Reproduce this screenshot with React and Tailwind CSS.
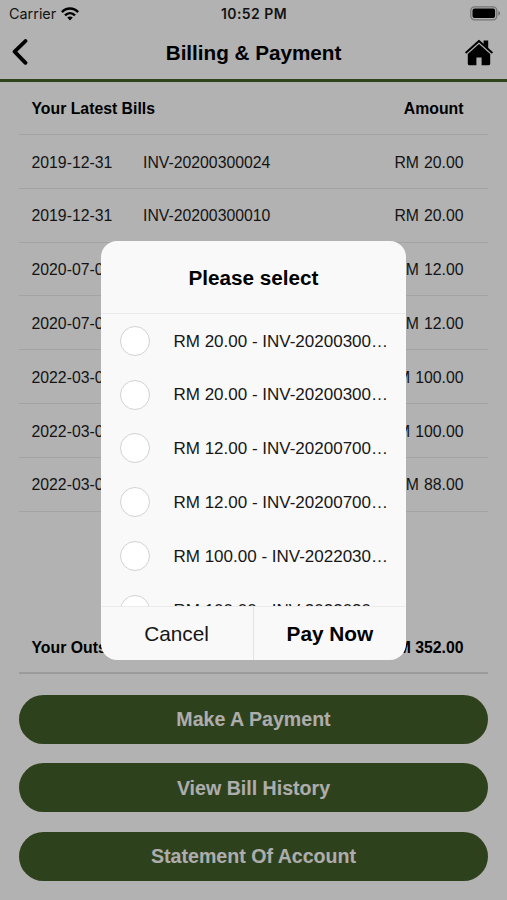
const bills = [
  { date: '2019-12-31', invoice: 'INV-20200300024', amount: 'RM 20.00' },
  { date: '2019-12-31', invoice: 'INV-20200300010', amount: 'RM 20.00' },
  { date: '2020-07-01', invoice: 'INV-20200700012', amount: 'RM 12.00' },
  { date: '2020-07-01', invoice: 'INV-20200700018', amount: 'RM 12.00' },
  { date: '2022-03-01', invoice: 'INV-20220300001', amount: 'RM 100.00' },
  { date: '2022-03-01', invoice: 'INV-20220300002', amount: 'RM 100.00' },
  { date: '2022-03-01', invoice: 'INV-20220300003', amount: 'RM 88.00' },
];

const actions = ['Make A Payment', 'View Bill History', 'Statement Of Account'];

function WifiIcon() {
  return (
    <svg width="18" height="14" viewBox="0 0 18 14" fill="none" stroke="#000" strokeWidth="2.5">
      <path d="M0.9 5.2C5.4 0.4 12.6 0.4 17.1 5.2" />
      <path d="M4 8.4C6.9 5.5 11.1 5.5 14 8.4" />
      <path d="M9 13.4L6.2 10.6C7.8 9.2 10.2 9.2 11.8 10.6Z" fill="#000" stroke="none" />
    </svg>
  );
}

function BatteryIcon() {
  return (
    <svg width="31" height="15" viewBox="0 0 31 15" fill="none">
      <rect x="0.8" y="0.8" width="26" height="13" rx="3.8" stroke="#000" strokeOpacity="0.35" strokeWidth="1.3" />
      <rect x="2.5" y="2.5" width="22.6" height="9.6" rx="2" fill="#000" />
      <path d="M28.3 5C30.6 5.8 30.6 8.8 28.3 9.6Z" fill="#000" fillOpacity="0.4" />
    </svg>
  );
}

function HomeIcon() {
  return (
    <svg width="28" height="27" viewBox="0 0 28 27" fill="#000">
      <path d="M1.2 13.4L14 1.9L26.8 13.4" fill="none" stroke="#000" strokeWidth="2" strokeLinecap="round" strokeLinejoin="round" />
      <path d="M18.6 1.6H23.2V9.4L18.6 5.4Z" />
      <path d="M14 5L25.2 15V24.8Q25.2 26.2 23.8 26.2H16.6V18.4H11.4V26.2H4.2Q2.8 26.2 2.8 24.8V15Z" />
    </svg>
  );
}

function Header() {
  return (
    <header className="h-[82px] border-b-[3px] border-[#456227] flex flex-col">
      <div className="h-[27px] grid grid-cols-[1fr_auto_1fr] items-center pl-[9px] pr-[6px] font-['Inter',sans-serif] text-[14px] leading-none">
        <div className="flex items-center gap-[5px]">
          <span className="text-[#1c1c1c] text-[14.4px] pt-px">Carrier</span>
          <WifiIcon />
        </div>
        <span className="font-semibold text-[#1c1c1c] tracking-[0.45px] mr-[2px]">10:52 PM</span>
        <div className="flex justify-end"><BatteryIcon /></div>
      </div>
      <div className="h-[50px] grid grid-cols-[1fr_auto_1fr] items-center pl-[12px] pr-[14px]">
        <button aria-label="Back">
          <svg width="16" height="26" viewBox="0 0 16 26" fill="none" stroke="#000" strokeWidth="3.8" strokeLinecap="round" strokeLinejoin="round">
            <path d="M13.5 2L2.6 12.7L13.5 23.8" />
          </svg>
        </button>
        <h1 className="text-[20.7px] font-bold leading-none ml-[2px] pt-[2px] tracking-[-0.02px]">Billing &amp; Payment</h1>
        <button aria-label="Home" className="justify-self-end"><HomeIcon /></button>
      </div>
    </header>
  );
}

function SelectDialog() {
  return (
    <div className="w-[305.6px] h-[419px] rounded-[16px] bg-[#f9f9f9] overflow-hidden flex flex-col text-black">
      <h2 className="h-[73px] pt-[2px] shrink-0 border-b border-[#eaeaea] flex items-center justify-center text-[20.7px] leading-[26px] font-bold">Please select</h2>
      <ul className="flex-1 min-h-0 overflow-hidden">
        {bills.map((bill) => (
          <li key={bill.invoice} className="h-[53.8px] flex items-center gap-[23.5px] pl-[19.3px] pr-[13px]">
            <span className="size-[30px] shrink-0 rounded-full bg-white border-[1.5px] border-[#d2d2d2]" />
            <span className="flex-1 min-w-0 pt-px truncate text-[17px] text-[#161616]">{bill.amount} - {bill.invoice}</span>
          </li>
        ))}
      </ul>
      <div className="h-[54px] shrink-0 border-t border-[#ececec] grid grid-cols-2 text-[20.8px]">
        <button className="border-r border-[#e4e4e4] text-[#161616]">Cancel</button>
        <button className="font-bold">Pay Now</button>
      </div>
    </div>
  );
}

export default function App() {
  return (
    <div className="relative w-[507px] h-[900px] overflow-hidden bg-white font-['Liberation_Sans',Arial,sans-serif] text-black">
      <Header />
      <main className="px-[19px]">
        <section className="h-[592px] flex flex-col text-[15.8px]">
          <div className="h-[53px] pt-[2px] border-b border-[#eaeaea] flex items-center justify-between pl-[12.5px] pr-[24.5px] font-bold">
            <span>Your Latest Bills</span>
            <span>Amount</span>
          </div>
          {bills.map((bill) => (
            <div key={bill.invoice} className="h-[53.8px] pt-[2px] border-b border-[#eaeaea] flex items-center pl-[12.5px] pr-[24.5px] text-[#1c1c1c]">
              <span className="w-[111.5px]">{bill.date}</span>
              <span>{bill.invoice}</span>
              <span className="ml-auto [word-spacing:0.6px]">{bill.amount}</span>
            </div>
          ))}
          <div className="mt-auto h-[55px] pt-[4px] border-b-2 border-[#dfdfdf] flex items-center justify-between pl-[12.5px] pr-[24.5px] font-bold">
            <span>Your Outstanding</span>
            <span>RM 352.00</span>
          </div>
        </section>
        <div className="mt-[20.5px] flex flex-col gap-[19.5px]">
          {actions.map((label) => (
            <button key={label} className="h-[49px] pt-[2px] shrink-0 rounded-full bg-[#435e2a] text-[19.6px] font-bold text-[#f8f8f8]">{label}</button>
          ))}
        </div>
      </main>
      <div className="absolute inset-0 bg-black/30 flex justify-center pt-[241px]">
        <SelectDialog />
      </div>
    </div>
  );
}
